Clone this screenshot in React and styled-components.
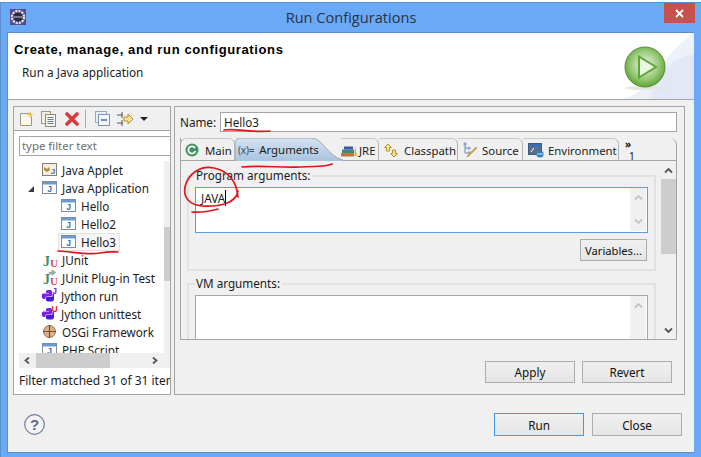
import React from "react";
import styled, { createGlobalStyle } from "styled-components";

const Global = createGlobalStyle`
  html, body { margin: 0; padding: 0; background: #fff; }
  * { box-sizing: border-box; }
  body { font-family: "Noto Sans", "Open Sans", sans-serif; font-size: 11.7px; color: #1c1c1c; }
`;

const Page = styled.div`
  position: relative;
  width: 701px;
  height: 457px;
  overflow: hidden;
  padding-top: 2px;
`;
const Frame = styled.div`
  height: 455px;
  background: #69a9f5;
  border-top: 1px solid #5b8fcb;
  border-left: 1px solid #5b8fcb;
  display: flex;
  flex-direction: column;
`;
const TitleBar = styled.div`
  position: relative;
  height: 29px;
  display: flex;
  align-items: center;
  justify-content: center;
`;
const AppIcon = styled.svg`
  position: absolute;
  left: 9px;
  top: 6px;
`;
const Title = styled.div`
  font-family: "Open Sans", "Noto Sans", sans-serif;
  font-size: 14.6px;
  color: #2a3442;
  margin-top: -1px;
`;
const CloseBox = styled.div`
  position: absolute;
  left: 663px;
  top: 0;
  width: 31px;
  height: 20px;
  background: #c75050;
  display: flex;
  align-items: center;
  justify-content: center;
`;
const Client = styled.div`
  margin-left: 6px;
  width: 687px;
  height: 421px;
  background: #f0f0f0;
  border: 1px solid #5b8fcb;
  border-right: 0;
  display: flex;
  flex-direction: column;
`;
const Banner = styled.div`
  position: relative;
  height: 67px;
  background: #fff;
  border-bottom: 1px solid #a5a5a5;
  display: flex;
  justify-content: space-between;
  overflow: hidden;
`;
const BannerText = styled.div`
  padding: 8px 0 0 6px;
`;
const BannerTitle = styled.div`
  font-family: "Liberation Sans", sans-serif;
  font-weight: 700;
  font-size: 13px;
  letter-spacing: 0.63px;
  line-height: 18px;
  color: #000;
`;
const BannerSub = styled.div`
  margin: 5px 0 0 8px;
  font-size: 11.8px;
  line-height: 16px;
`;
const BannerWash = styled.svg`
  position: absolute;
  right: 0;
  top: 0;
`;
const PlayIcon = styled.svg`
  position: relative;
  margin: 13px 28px 0 0;
`;
const Main = styled.div`
  display: flex;
  gap: 3px;
  padding: 6px 0 0 5px;
  height: 296px;
`;
const LeftPanel = styled.div`
  width: 158px;
  height: 289px;
  border: 1px solid #a5a5a5;
  background: #fff;
  display: flex;
  flex-direction: column;
  overflow: hidden;
`;
const Toolbar = styled.div`
  height: 24px;
  flex: none;
  background: #f0f0f0;
  border-bottom: 1px solid #a5a5a5;
  display: flex;
  align-items: center;
  padding-left: 5px;
`;
const ToolIcon = styled.svg`
  flex: none;
  margin-right: ${(p) => p.$gap ?? 6}px;
`;
const ToolSep = styled.div`
  width: 1px;
  height: 18px;
  background: #a8a8a8;
  margin: 0 9px 0 6px;
`;
const FilterInput = styled.div`
  margin: 5px 0 0 5px;
  width: 170px;
  height: 20px;
  flex: none;
  border: 1px solid #a5a5a5;
  background: #fff;
  padding-left: 2px;
  line-height: 18px;
  font-size: 11.4px;
  color: #6d6d6d;
  white-space: nowrap;
`;
const TreeArea = styled.div`
  margin: 5px 0 0 5px;
  height: 192px;
  flex: none;
  display: flex;
`;
const TreeList = styled.div`
  width: 145px;
  height: 192px;
  overflow: hidden;
  background: #fff;
`;
const TreeRow = styled.div`
  position: relative;
  height: 18px;
  display: flex;
  align-items: center;
  white-space: nowrap;
  padding-bottom: 1px;
  padding-left: ${(p) => p.$indent}px;
`;
const Expander = styled.span`
  position: absolute;
  left: 9px;
  top: 7px;
  width: 0;
  height: 0;
  border-style: solid;
  border-width: 0 0 6px 6px;
  border-color: transparent transparent #3a3a3a transparent;
`;
const Selected = styled.div`
  display: flex;
  align-items: center;
  margin-left: -3px;
  padding-left: 2px;
  width: 62px;
  height: 18px;
  background: #f6f6f6;
  border: 1px solid #e2e2e2;
`;
const RowIcon = styled.svg`
  flex: none;
  margin-left: ${(p) => p.$shift ?? 0}px;
  margin-right: ${(p) => p.$gap ?? 5}px;
`;
const VScroll = styled.div`
  width: 6px;
  background: #f0f0f0;
  display: flex;
  flex-direction: column;
  position: relative;
`;
const VThumb = styled.div`
  margin-top: ${(p) => p.$top}px;
  height: ${(p) => p.$h}px;
  background: #cdcdcd;
`;
const HScroll = styled.div`
  margin-left: 5px;
  height: 15px;
  flex: none;
  background: #f0f0f0;
  display: flex;
  align-items: center;
  padding-left: 4px;
  width: 151px;
`;
const HThumb = styled.div`
  width: 74px;
  height: 15px;
  background: #cdcdcd;
  margin: 0 40px 0 4px;
`;
const Chevron = styled.svg`
  flex: none;
  display: block;
`;
const FilterStatus = styled.div`
  margin: 5px 0 0 5px;
  font-size: 12px;
  white-space: nowrap;
  line-height: 16px;
`;
const RightPanel = styled.div`
  width: 511px;
  height: 289px;
  border: 1px solid #a5a5a5;
  padding: 5px 0 0 5px;
`;
const NameRow = styled.div`
  display: flex;
  align-items: center;
  height: 20px;
`;
const NameLabel = styled.div`
  width: 40px;
`;
const NameInput = styled.div`
  width: 457px;
  height: 20px;
  background: #fff;
  border: 1px solid #a5a5a5;
  padding-left: 3px;
  line-height: 18px;
`;
const Folder = styled.div`
  margin-top: 6px;
  width: 497px;
  height: 202px;
  border: 1px solid #a5a5a5;
  border-top: 0;
  border-top-right-radius: 7px;
  overflow: hidden;
  display: flex;
  flex-direction: column;
`;
const TabStrip = styled.div`
  position: relative;
  height: 23px;
  flex: none;
  display: flex;
  font-size: 11.4px;
  border-bottom: 1px solid #a5a5a5;
  margin: 0 -1px;
`;
const Tab = styled.div`
  position: relative;
  width: ${(p) => p.$w}px;
  flex: none;
  display: flex;
  align-items: center;
  white-space: nowrap;
  padding: 1px 0 0 ${(p) => p.$pad ?? 3}px;
  border-top: 1px solid #c8c8c8;
  border-right: 1px solid #b5b5b5;
  border-top-right-radius: 6px;
  ${(p) => p.$first && "border-left: 1px solid #a5a5a5; border-top-left-radius: 6px;"}
`;
const TabIcon = styled.svg`
  flex: none;
  margin-right: ${(p) => p.$gap ?? 4}px;
`;
const ActiveTab = styled.div`
  position: relative;
  width: 110px;
  margin-right: -4px;
  flex: none;
  display: flex;
  align-items: center;
  white-space: nowrap;
  padding: 1px 0 0 3px;
`;
const ActiveShape = styled.svg`
  position: absolute;
  left: 0;
  top: 0;
`;
const ActiveContent = styled.div`
  position: relative;
  display: flex;
  align-items: center;
`;
const VarSign = styled.span`
  font-size: 10px;
  color: #3b4a66;
  margin-right: 5px;
  letter-spacing: -0.2px;
`;
const MoreTab = styled.div`
  padding: 2px 0 0 6px;
  font-size: 10px;
  line-height: 9px;
  color: #111;
  font-weight: 700;
`;
const MoreCount = styled.span`
  font-weight: 400;
  margin-left: 4px;
  position: relative;
  top: 3px;
`;
const FolderBody = styled.div`
  flex: 1;
  display: flex;
  overflow: hidden;
  min-height: 0;
`;
const Pane = styled.div`
  width: 480px;
  padding: 14px 0 0 6px;
`;
const Group = styled.div`
  position: relative;
  width: 469px;
  height: ${(p) => p.$h}px;
  border: 2px solid #e2e2e2;
  margin-bottom: ${(p) => p.$mb ?? 0}px;
  padding: 10px 0 0 6px;
`;
const GroupLabel = styled.div`
  position: absolute;
  left: 6px;
  top: -10px;
  padding: 0 2px 0 1px;
  background: #f0f0f0;
  line-height: 16px;
  white-space: nowrap;
`;
const TextArea = styled.div`
  position: relative;
  width: 453px;
  height: ${(p) => p.$h}px;
  background: #fff;
  border: 1px solid ${(p) => (p.$focus ? "#569de5" : "#a5a5a5")};
  padding: 1px 0 0 5px;
  line-height: 18px;
  display: flex;
  justify-content: space-between;
`;
const Caret = styled.span`
  display: inline-block;
  width: 1px;
  height: 16px;
  background: #000;
  vertical-align: -3px;
`;
const AreaScroll = styled.div`
  width: 16px;
  margin: -1px 1px 0 0;
  background: #f0f0f0;
  height: ${(p) => p.$h}px;
  display: flex;
  flex-direction: column;
  justify-content: space-between;
  align-items: center;
  padding: 6px 0;
`;
const VarRow = styled.div`
  display: flex;
  justify-content: flex-end;
  width: 452px;
  margin-top: 6px;
  font-size: 11.2px;
`;
const Btn = styled.div`
  width: ${(p) => p.$w}px;
  height: ${(p) => p.$h ?? 22}px;
  background: linear-gradient(#f0f0f0, #e5e5e5);
  border: 1px solid ${(p) => (p.$def ? "#3a9bf0" : "#acacac")};
  display: flex;
  align-items: center;
  justify-content: center;
  color: #111;
`;
const BodyScroll = styled.div`
  width: 16px;
  display: flex;
  flex-direction: column;
  align-items: center;
  padding-top: 6px;
  background: #f0f0f0;
`;
const BodyThumb = styled.div`
  width: 15px;
  height: 75px;
  background: #cdcdcd;
  margin: 5px 0 73px;
`;
const ApplyRow = styled.div`
  display: flex;
  justify-content: flex-end;
  gap: 7px;
  margin-top: 21px;
  padding-right: 12px;
  width: 504px;
`;
const Footer = styled.div`
  display: flex;
  align-items: center;
  justify-content: space-between;
  padding: 17px 12px 0 16px;
`;
const FooterButtons = styled.div`
  display: flex;
  gap: 8px;
`;
const Ink = styled.svg`
  position: absolute;
  left: 0;
  top: 0;
  pointer-events: none;
`;

const Chev = ({ dir = "up", color = "#555", w = 9, sw = 1.8 }) => (
  <Chevron width={w} height="7" viewBox="0 0 9 7">
    <path d={dir === "up" ? "M1 5.5L4.5 2L8 5.5" : dir === "down" ? "M1 1.5L4.5 5L8 1.5" : dir === "left" ? "M6 .5L2.5 3.5L6 6.5" : "M3 .5L6.5 3.5L3 6.5"} fill="none" stroke={color} strokeWidth={sw} />
  </Chevron>
);

const JavaIcon = ({ gap }) => (
  <RowIcon width="15" height="13" viewBox="0 0 15 13" $gap={gap}>
    <rect x=".5" y=".5" width="14" height="12" fill="#fff" stroke="#7a8ea8" />
    <rect x="1" y="1" width="13" height="2.5" fill="#6d9bd0" />
    <text x="7.5" y="11" fontSize="8.5" fontFamily="Liberation Sans" fontWeight="700" fill="#3a6ea8" textAnchor="middle">J</text>
  </RowIcon>
);
const AppletIcon = () => (
  <RowIcon width="15" height="13" viewBox="0 0 15 13" $gap={5}>
    <rect x=".5" y=".5" width="14" height="12" fill="#f4efe2" stroke="#8a7f6a" />
    <path d="M2 4l3 2 2-2 1 3-3 2-3-2z" fill="#b08a3e" />
    <text x="11" y="10.5" fontSize="8" fontFamily="Liberation Sans" fontWeight="700" fill="#3a6ea8" textAnchor="middle">J</text>
  </RowIcon>
);
const JUnitIcon = ({ plug }) => (
  <RowIcon width="17" height="18" viewBox="0 0 17 18" $gap={3}>
    {plug && <path d="M7 3h3V0.5l4 3-4 3V5H7z" fill="#8aa6dc" stroke="#c9a33a" strokeWidth=".5" />}
    <text x="4.5" y="15" fontSize="14" fontFamily="Liberation Serif" fontWeight="700" fill="#3f8f6c" textAnchor="middle">J</text>
    <text x="12" y="16" fontSize="11" fontFamily="Liberation Serif" fontWeight="700" fill="#d85050" textAnchor="middle">U</text>
  </RowIcon>
);
const JythonIcon = ({ mark, color }) => (
  <RowIcon width="17" height="18" viewBox="0 0 17 18" $gap={3} $shift={-1}>
    <path d="M5 4.5C5 3 6.5 3 8 3s3 0 3 1.5V8c0 1-1 1.5-2 1.5H6C5 9.500 4.500 10 4.500 11v1H3C1.500 12 .8 11 .8 9S1.500 6.500 3 6.500h5V6H5z" fill="#7a22e6" />
    <path d="M13 8.500V11c0 1 0 3-2 3.500H7c-1.500 0-2-1-2-2v-1.500c0-.5.500-1 1-1h4c1 0 1.500-.5 1.500-1.500V7h1C13 7 13 7.500 13 8.500z" fill="#4a18d8" />
    <text x="13.5" y="7" fontSize="8.500" fontFamily="Liberation Sans" fontWeight="700" fill={color} textAnchor="middle">{mark}</text>
  </RowIcon>
);
const OsgiIcon = () => (
  <RowIcon width="15" height="15" viewBox="0 0 15 15" $gap={5}>
    <circle cx="7.5" cy="7.5" r="6" fill="#d8b48c" stroke="#96714c" />
    <path d="M7.5 1v13M1 7.5h13" stroke="#8a4a2a" strokeWidth="1.200" />
  </RowIcon>
);

const rows = [
  { t: "Java Applet", i: 23, icon: <AppletIcon /> },
  { t: "Java Application", i: 23, exp: true, icon: <JavaIcon gap={5} /> },
  { t: "Hello", i: 42, icon: <JavaIcon gap={5} /> },
  { t: "Hello2", i: 42, icon: <JavaIcon gap={5} /> },
  { t: "Hello3", i: 42, sel: true, icon: <JavaIcon gap={5} /> },
  { t: "JUnit", i: 23, icon: <JUnitIcon /> },
  { t: "JUnit Plug-in Test", i: 23, icon: <JUnitIcon plug /> },
  { t: "Jython run", i: 23, icon: <JythonIcon mark="J" color="#7a22e6" /> },
  { t: "Jython unittest", i: 23, icon: <JythonIcon mark="U" color="#e02020" /> },
  { t: "OSGi Framework", i: 23, icon: <OsgiIcon /> },
  { t: "PHP Script", i: 23, icon: <JavaIcon /> },
];

export default function App() {
  return (
    <Page>
      <Global />
      <Frame>
        <TitleBar>
          <AppIcon width="16" height="16" viewBox="0 0 16 16">
            <rect width="16" height="16" fill="#5a4a8c" />
            <circle cx="8" cy="8" r="6" fill="#2c2a4a" stroke="#e4e4e8" strokeWidth="2.4" strokeDasharray="2.2 .9" />
            <path d="M3.500 8h9" stroke="#c9c9d6" />
          </AppIcon>
          <Title>Run Configurations</Title>
          <CloseBox>
            <svg width="9" height="9" viewBox="0 0 9 9"><path d="M1 1l7 7M8 1L1 8" stroke="#fff" strokeWidth="1.8" /></svg>
          </CloseBox>
        </TitleBar>
        <Client>
          <Banner>
            <BannerWash width="72" height="66" viewBox="0 0 72 66">
              <defs>
                <linearGradient id="wash" x1="0" y1="0" x2="1" y2="1">
                  <stop offset="0" stopColor="#f8fafd" />
                  <stop offset="1" stopColor="#e4eaf7" />
                </linearGradient>
              </defs>
              <path d="M0 66C30 60 35 25 72 0V66z" fill="url(#wash)" />
              <path d="M28 66C34 45 46 26 72 21V66z" fill="#e2e8f6" />
            </BannerWash>
            <BannerText>
              <BannerTitle>Create, manage, and run configurations</BannerTitle>
              <BannerSub>Run a Java application</BannerSub>
            </BannerText>
            <PlayIcon width="42" height="46" viewBox="0 0 42 46">
              <defs>
                <radialGradient id="orb" cx=".5" cy=".45" r=".6">
                  <stop offset="0" stopColor="#eef6e8" />
                  <stop offset=".55" stopColor="#a0cc82" />
                  <stop offset="1" stopColor="#4f9e22" />
                </radialGradient>
              </defs>
              <ellipse cx="21" cy="42" rx="20" ry="2" fill="#e4e6e2" />
              <circle cx="21" cy="21" r="20" fill="url(#orb)" stroke="#5f8a38" />
              <path d="M15 10.500L32 21L15 31.500z" fill="#e9f6e2" stroke="#5aa832" strokeWidth="2" />
            </PlayIcon>
          </Banner>
          <Main>
            <LeftPanel>
              <Toolbar>
                <ToolIcon width="15" height="16" viewBox="0 0 15 16" $gap={7}>
                  <path d="M1.500 2.500h8l3 3v9h-11z" fill="#fbf8e8" stroke="#9a9a8a" />
                  <path d="M11 0l1 2.500 2.500 1-2.500 1-1 2.500-1-2.500-2.500-1 2.500-1z" fill="#f2c23c" />
                </ToolIcon>
                <ToolIcon width="15" height="16" viewBox="0 0 15 16" $gap={9}>
                  <rect x=".5" y=".5" width="9" height="12" fill="#f3efdf" stroke="#9a9a8a" />
                  <rect x="4.500" y="3.500" width="10" height="12" fill="#f8f6ea" stroke="#8c8c7c" />
                  <path d="M6.500 6.500h6M6.500 8.500h6M6.500 10.500h6M6.500 12.500h6" stroke="#6a7fa8" />
                </ToolIcon>
                <ToolIcon width="14" height="14" viewBox="0 0 14 14" $gap={0}>
                  <path d="M2 2l10 10M12 2L2 12" stroke="#d93a3f" strokeWidth="3.6" strokeLinecap="round" />
                </ToolIcon>
                <ToolSep />
                <ToolIcon width="15" height="15" viewBox="0 0 15 15" $gap={7}>
                  <rect x=".5" y=".5" width="11" height="11" fill="#e8eef6" stroke="#93a7c0" />
                  <rect x="3.500" y="3.500" width="11" height="11" fill="#f3f6fa" stroke="#7d93b0" />
                  <path d="M6 9h6" stroke="#3a5f96" strokeWidth="1.400" />
                </ToolIcon>
                <ToolIcon width="17" height="16" viewBox="0 0 17 16" $gap={6}>
                  <path d="M0 4h6M0 12h6M5 1v6M5 9v6" stroke="#555" />
                  <path d="M7 6h4V3l5 5-5 5v-3H7z" fill="#f7e39a" stroke="#b8902c" />
                </ToolIcon>
                <svg width="8" height="4" viewBox="0 0 8 4"><path d="M0 0h8L4 4z" fill="#222" /></svg>
              </Toolbar>
              <FilterInput>type filter text</FilterInput>
              <TreeArea>
                <TreeList>
                  {rows.map((r) => (
                    <TreeRow key={r.t} $indent={r.i}>
                      {r.exp && <Expander />}
                      {r.sel ? (
                        <Selected>{r.icon}{r.t}</Selected>
                      ) : (
                        <>{r.icon}{r.t}</>
                      )}
                    </TreeRow>
                  ))}
                </TreeList>
                <VScroll><VThumb $top={66} $h={54} /></VScroll>
              </TreeArea>
              <HScroll>
                <Chev dir="left" color="#555" />
                <HThumb />
                <Chev dir="right" color="#555" />
              </HScroll>
              <FilterStatus>Filter matched 31 of 31 items</FilterStatus>
            </LeftPanel>
            <RightPanel>
              <NameRow>
                <NameLabel>Name:</NameLabel>
                <NameInput>Hello3</NameInput>
              </NameRow>
              <Folder>
                <TabStrip>
                  <Tab $w={55} $first $pad={4}>
                    <TabIcon width="14" height="14" viewBox="0 0 14 14" $gap={6}>
                      <circle cx="7" cy="7" r="6.500" fill="#3d9460" />
                      <path d="M10 5a3.600 3.600 0 1 0 .4 3" fill="none" stroke="#fff" strokeWidth="1.700" />
                    </TabIcon>
                    Main
                  </Tab>
                  <ActiveTab>
                    <ActiveShape width="110" height="23" viewBox="0 0 110 23">
                      <defs>
                        <linearGradient id="tabg" x1="0" y1="0" x2="0" y2="1">
                          <stop offset="0" stopColor="#d5e3f2" />
                          <stop offset="1" stopColor="#a9c3de" />
                        </linearGradient>
                      </defs>
                      <path d="M0 23V5Q0 0 6 0H76C88 0 92 18 108 22V23z" fill="url(#tabg)" />
                      <path d="M0 23V5Q0 0 6 0H76C88 0 92 18 108 22" fill="none" stroke="#a5a5a5" />
                    </ActiveShape>
                    <ActiveContent>
                      <VarSign>(x)=</VarSign>
                      Arguments
                    </ActiveContent>
                  </ActiveTab>
                  <Tab $w={38} $pad={0}>
                    <TabIcon width="16" height="13" viewBox="0 0 16 13" $gap={2}>
                      <rect x="0" y="9" width="13" height="3.500" fill="#b87a3a" />
                      <rect x="1" y="5.500" width="12" height="3.500" fill="#3f8a7a" />
                      <rect x="3" y="2.500" width="9" height="3" fill="#3a5aa8" />
                      <path d="M14 2l2 10h-2.500z" fill="#e0a92c" />
                    </TabIcon>
                    JRE
                  </Tab>
                  <Tab $w={79} $pad={5}>
                    <TabIcon width="15" height="15" viewBox="0 0 15 15" $gap={5}>
                      <path d="M4 1l3.500 3.500H5.500V8h-3V4.500H.5z" fill="#f6e3a0" stroke="#b8902c" />
                      <path d="M10 14l-3.500-3.500h2V7h3v3.500h2z" fill="#f6e3a0" stroke="#b8902c" />
                    </TabIcon>
                    Classpath
                  </Tab>
                  <Tab $w={65} $pad={5}>
                    <TabIcon width="15" height="16" viewBox="0 0 15 16" $gap={4}>
                      <path d="M2 3v8h3M2 6h3" fill="none" stroke="#6a88b0" />
                      <rect x="0.500" y="0.500" width="3" height="3" fill="#8aa6cc" />
                      <rect x="5" y="5" width="2.500" height="2.500" fill="#8aa6cc" />
                      <rect x="5" y="9.500" width="2.500" height="2.500" fill="#8aa6cc" />
                      <path d="M14 6L6 14l-2 1 1-2 8-8z" fill="#e2b042" stroke="#9b7a2a" strokeWidth=".5" />
                    </TabIcon>
                    Source
                  </Tab>
                  <Tab $w={96} $pad={5}>
                    <TabIcon width="16" height="15" viewBox="0 0 16 15" $gap={4}>
                      <rect x=".5" y=".5" width="13" height="11" fill="#5a6f8c" stroke="#3f5a80" />
                      <rect x="1" y="1" width="12" height="2.500" fill="#3570b8" />
                      <path d="M3 9l3-4" stroke="#fff" />
                      <circle cx="12" cy="11" r="3.600" fill="#2f7fc4" />
                      <path d="M9 11h6" stroke="#d8e8f6" />
                    </TabIcon>
                    Environment
                  </Tab>
                  <MoreTab>
                    &raquo;
                    <br />
                    <MoreCount>1</MoreCount>
                  </MoreTab>
                </TabStrip>
                <FolderBody>
                  <Pane>
                    <Group $h={96} $mb={12}>
                      <GroupLabel>Program arguments:</GroupLabel>
                      <TextArea $focus $h={46}>
                        <span>JAVA<Caret /></span>
                        <AreaScroll $h={43}>
                          <Chev dir="up" color="#c4c4c4" />
                          <Chev dir="down" color="#c4c4c4" />
                        </AreaScroll>
                      </TextArea>
                      <VarRow><Btn $w={67}>Variables...</Btn></VarRow>
                    </Group>
                    <Group $h={90}>
                      <GroupLabel>VM arguments:</GroupLabel>
                      <TextArea $h={70}>
                        <span />
                        <AreaScroll $h={68}>
                          <Chev dir="up" color="#c4c4c4" />
                          <Chev dir="down" color="#c4c4c4" />
                        </AreaScroll>
                      </TextArea>
                    </Group>
                  </Pane>
                  <BodyScroll>
                    <Chev dir="up" color="#555" />
                    <BodyThumb />
                    <Chev dir="down" color="#555" />
                  </BodyScroll>
                </FolderBody>
              </Folder>
              <ApplyRow>
                <Btn $w={90}>Apply</Btn>
                <Btn $w={90}>Revert</Btn>
              </ApplyRow>
            </RightPanel>
          </Main>
          <Footer>
            <svg width="21" height="21" viewBox="0 0 21 21">
              <circle cx="10.500" cy="10.500" r="9.800" fill="#f4f4f6" stroke="#6f7f9c" strokeWidth="1.200" />
              <text x="10.500" y="16" fontSize="15" fontFamily="Liberation Sans" fontWeight="700" fill="#5a6a88" textAnchor="middle">?</text>
            </svg>
            <FooterButtons>
              <Btn $w={90} $h={23} $def>Run</Btn>
              <Btn $w={90} $h={23}>Close</Btn>
            </FooterButtons>
          </Footer>
        </Client>
      </Frame>
      <Ink width="701" height="457" viewBox="0 0 701 457" fill="none" stroke="#e0141c" strokeWidth="1.700" strokeLinecap="round">
        <path d="M224 130C236 128 252 133 270 131" />
        <path d="M242 167C262 165 280 168 300 167S325 167 332 164" />
        <path d="M238 197C237 186 232 172 214 168C200 165 188 174 185 187C183 198 190 205 202 206C218 207 236 204 238 191" />
        <path d="M192 212C202 213 210 211 218 209" />
        <path d="M58 251C74 252 88 255 100 253S112 252 118 252" />
      </Ink>
    </Page>
  );
}
